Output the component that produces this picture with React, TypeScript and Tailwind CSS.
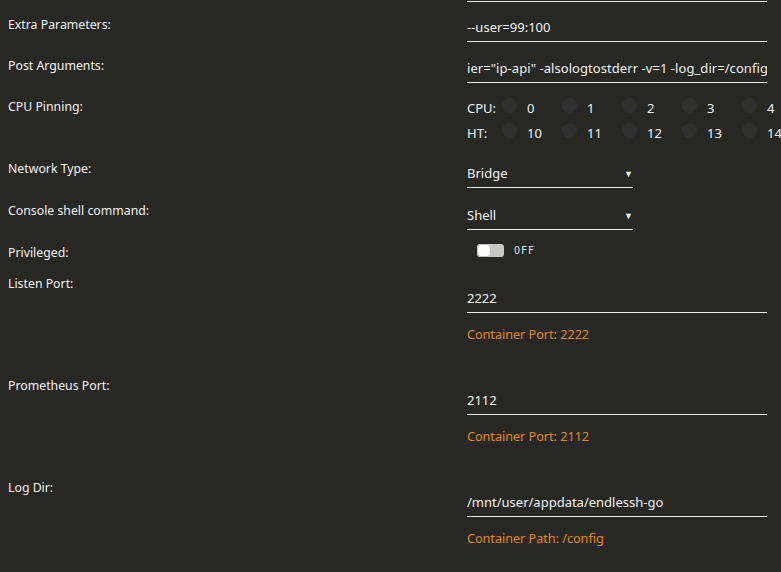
const FONT = "font-['Noto_Sans','Open_Sans',sans-serif]";

function Row({ label, children, h }: { label: string; children?: React.ReactNode; h: string }) {
  return (
    <div className={`flex ${h}`}>
      <div className="w-[467px] shrink-0 pl-2 text-[12.3px] leading-[16px] text-[#f2f2f2]">{label}</div>
      <div className="min-w-0 flex-1">{children}</div>
    </div>
  );
}

function TextInput({ value, wide }: { value: string; wide?: boolean }) {
  return (
    <div className="flex h-[28px] w-[300px] items-center overflow-hidden whitespace-nowrap border-b border-[#e8e8e8] text-[13px] text-[#f2f2f2]">
      <span className={wide ? "shrink-0 tracking-[0.06px]" : "shrink-0"}>{value}</span>
    </div>
  );
}

function Select({ value }: { value: string }) {
  return (
    <div className="flex h-[28px] w-[166px] items-center justify-between border-b border-[#e8e8e8] text-[13px] text-[#f2f2f2]">
      <span>{value}</span>
      <span className="text-[9px] leading-none">▼</span>
    </div>
  );
}

function CpuRow({ label, nums }: { label: string; nums: number[] }) {
  return (
    <div className="flex h-[25px] items-center overflow-hidden text-[13px] text-[#f2f2f2]">
      <span className="w-[35px] shrink-0">{label}</span>
      {nums.map((n) => (
        <div key={n} className="flex w-[60px] shrink-0 items-center">
          <span className="h-[15px] w-[15px] shrink-0 -translate-y-[3px] rounded-full bg-[#303030]" />
          <span className="ml-[10px] pt-[1px]">{n}</span>
        </div>
      ))}
    </div>
  );
}

function PortHint({ children }: { children: React.ReactNode }) {
  return <div className="mt-[14px] text-[12.6px] leading-[16px] text-[#e68a00]">{children}</div>;
}

export default function App() {
  return (
    <div className={`h-[572px] w-[781px] overflow-hidden bg-[#272723] ${FONT}`}>
      <div className="ml-[467px] h-[2px] w-[300px] border-b border-[#e8e8e8]" />
      <div className="pt-[15px]">
        <Row label="Extra Parameters:" h="h-[41px]">
          <div className="-mt-[3px]">
            <TextInput value="--user=99:100" />
          </div>
        </Row>
        <Row label="Post Arguments:" h="h-[41px]">
          <div className="-mt-[3px]">
            <TextInput wide value={'ier="ip-api" -alsologtostderr -v=1 -log_dir=/config'} />
          </div>
        </Row>
        <Row label="CPU Pinning:" h="h-[62px]">
          <div className="-mt-[3px]">
            <CpuRow label="CPU:" nums={[0, 1, 2, 3, 4]} />
            <CpuRow label="HT:" nums={[10, 11, 12, 13, 14]} />
          </div>
        </Row>
        <Row label="Network Type:" h="h-[42px]">
          <div className="-mt-[1px]">
            <Select value="Bridge" />
          </div>
        </Row>
        <Row label="Console shell command:" h="h-[42px]">
          <div className="-mt-[1px]">
            <Select value="Shell" />
          </div>
        </Row>
        <Row label="Privileged:" h="h-[31px]">
          <div className="flex items-center pl-[10px] -mt-[2px]">
            <div className="flex h-[13px] w-[27px] items-center rounded-[3px] bg-[#c8c8c8]">
              <span className="h-[13px] w-[14px] rounded-[4px] border border-[#bdbdbd] bg-white" />
            </div>
            <span className="ml-[10px] font-['DejaVu_Sans_Mono',monospace] text-[10px] tracking-[1px] text-[#d8e4ef]">OFF</span>
          </div>
        </Row>
        <Row label="Listen Port:" h="h-[102px]">
          <div className="pt-[9px]">
            <TextInput value="2222" />
            <PortHint>Container Port: 2222</PortHint>
          </div>
        </Row>
        <Row label="Prometheus Port:" h="h-[102px]">
          <div className="pt-[9px]">
            <TextInput value="2112" />
            <PortHint>Container Port: 2112</PortHint>
          </div>
        </Row>
        <Row label="Log Dir:" h="h-[102px]">
          <div className="pt-[9px]">
            <TextInput value="/mnt/user/appdata/endlessh-go" />
            <PortHint>Container Path: /config</PortHint>
          </div>
        </Row>
      </div>
    </div>
  );
}
